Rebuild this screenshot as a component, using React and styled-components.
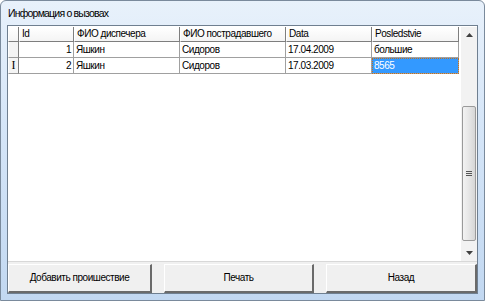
import React from 'react';
import styled, { createGlobalStyle } from 'styled-components';

const GlobalStyle = createGlobalStyle`
	html, body { margin: 0; padding: 0; background: #ffffff; }
	body { font-family: "Liberation Sans", Arial, sans-serif; }
`;

const columns = [
	{ key: 'id', title: 'Id', width: 55, align: 'right' },
	{ key: 'dispatcher', title: 'ФИО диспечера', width: 106 },
	{ key: 'victim', title: 'ФИО пострадавшего', width: 106 },
	{ key: 'date', title: 'Data', width: 86 },
	{ key: 'result', title: 'Posledstvie', width: 87 },
];

const rows = [
	{ id: '1', dispatcher: 'Яшкин', victim: 'Сидоров', date: '17.04.2009', result: 'большие' },
	{ id: '2', dispatcher: 'Яшкин', victim: 'Сидоров', date: '17.03.2009', result: '8565', editing: true },
];

const Window = styled.div`
	width: 485px;
	height: 301px;
	box-sizing: border-box;
	display: flex;
	flex-direction: column;
	border: 1px solid #7a8a9c;
	border-radius: 6px 6px 0 0;
	background: linear-gradient(180deg, #e8f1fb 0%, #d6e6f8 40%, #c2d8f1 100%);
	padding: 0 6px 6px 6px;
`;

const TitleBar = styled.div`
	height: 24px;
	display: flex;
	align-items: center;
	padding-left: 1px;
	font-size: 10.5px;
	letter-spacing: -0.8px;
	color: #000000;
`;

const Client = styled.div`
	flex: 1;
	display: flex;
	flex-direction: column;
	border: 1px solid #6f7f90;
	background: #f0f0f0;
`;

const GridArea = styled.div`
	height: 235px;
	display: flex;
	background: #ffffff;
	border-bottom: 1px solid #d8d8d8;
`;

const Table = styled.div`
	flex: 1;
	display: flex;
	flex-direction: column;
	padding-top: 1px;
`;

const Row = styled.div`
	display: grid;
	grid-template-columns: 11px ${columns.map((c) => `${c.width}px`).join(' ')};
	height: ${(p) => (p.$header ? '15px' : '16px')};
`;

const HeaderCell = styled.div`
	box-sizing: border-box;
	background: linear-gradient(180deg, #ffffff 0%, #f4f4f4 100%);
	border-right: 1px solid #7e7e7e;
	border-bottom: 1px solid #7e7e7e;
	border-left: 1px solid #ffffff;
	font-size: 10px;
	letter-spacing: -0.45px;
	line-height: 14px;
	padding-left: 2px;
	color: #000000;
	white-space: nowrap;
	overflow: hidden;
`;

const RowHead = styled.div`
	box-sizing: border-box;
	background: #f4f4f4;
	border-right: 1px solid #7e7e7e;
	border-bottom: 1px solid #9a9a9a;
	border-left: 1px solid #ffffff;
	display: flex;
	align-items: center;
	justify-content: center;
	font-family: "Liberation Serif", serif;
	font-size: 12px;
	color: #000000;
`;

const Cell = styled.div`
	box-sizing: border-box;
	border-right: 1px solid #a0a0a0;
	border-bottom: 1px solid #a0a0a0;
	font-size: 10px;
	letter-spacing: -0.45px;
	line-height: 15px;
	padding: 0 2px;
	text-align: ${(p) => p.$align || 'left'};
	white-space: nowrap;
	overflow: hidden;
	background: ${(p) => (p.$selected ? '#3399ff' : '#ffffff')};
	color: ${(p) => (p.$selected ? '#ffffff' : '#000000')};
	outline: ${(p) => (p.$selected ? '1px dotted #c07020' : 'none')};
	outline-offset: -1px;
`;

const ScrollBar = styled.div`
	width: 16px;
	margin: 1px 1px 0 2px;
	display: flex;
	flex-direction: column;
	align-items: center;
	background: #f2f2f2;
`;

const Arrow = styled.div`
	height: 16px;
	width: 16px;
	display: flex;
	align-items: center;
	justify-content: center;
`;

const Track = styled.div`
	flex: 1;
	width: 100%;
	display: flex;
	flex-direction: column;
	justify-content: flex-end;
	padding-bottom: 4px;
`;

const Thumb = styled.div`
	height: 135px;
	margin: 0 1px;
	box-sizing: border-box;
	border: 1px solid #9a9a9a;
	border-radius: 2px;
	background: linear-gradient(90deg, #f3f3f3 0%, #e6e6e6 50%, #d6d6d6 100%);
	display: flex;
	align-items: center;
	justify-content: center;
`;

const ButtonRow = styled.div`
	flex: 1;
	display: grid;
	grid-template-columns: 144px 150px 1fr;
	column-gap: 12px;
	padding-top: 2px;
`;

const Button = styled.button`
	width: 100%;
	box-sizing: border-box;
	margin: 0;
	border: none;
	border-top: 1px solid #ffffff;
	border-left: 1px solid #ffffff;
	border-right: 2px solid #6a6a6a;
	border-bottom: 2px solid #6a6a6a;
	background: #f0f0f0;
	font-family: "Liberation Sans", Arial, sans-serif;
	font-size: 10px;
	letter-spacing: -0.45px;
	color: #000000;
	padding: 0 0 2px 0;
`;

function ArrowIcon({ down }) {
	return (
		<svg width="7" height="4" viewBox="0 0 7 4">
			<path d={down ? 'M0 0H7L3.5 4Z' : 'M0 4H7L3.5 0Z'} fill="#404040" />
		</svg>
	);
}

export default function App() {
	return (
		<>
			<GlobalStyle />
			<Window>
				<TitleBar>Информация о вызовах</TitleBar>
				<Client>
					<GridArea>
						<Table>
							<Row $header>
								<HeaderCell />
								{columns.map((c) => (
									<HeaderCell key={c.key}>{c.title}</HeaderCell>
								))}
							</Row>
							{rows.map((r) => (
								<Row key={r.id}>
									<RowHead>{r.editing ? 'I' : ''}</RowHead>
									{columns.map((c) => (
										<Cell key={c.key} $align={c.align} $selected={r.editing && c.key === 'result'}>
											{r[c.key]}
										</Cell>
									))}
								</Row>
							))}
						</Table>
						<ScrollBar>
							<Arrow>
								<ArrowIcon />
							</Arrow>
							<Track>
								<Thumb>
									<svg width="6" height="5" viewBox="0 0 6 5">
										<path d="M0 0.5H6M0 2.5H6M0 4.5H6" stroke="#555" strokeWidth="1" />
									</svg>
								</Thumb>
							</Track>
							<Arrow>
								<ArrowIcon down />
							</Arrow>
						</ScrollBar>
					</GridArea>
					<ButtonRow>
						<Button>Добавить проишествие</Button>
						<Button>Печать</Button>
						<Button>Назад</Button>
					</ButtonRow>
				</Client>
			</Window>
		</>
	);
}
